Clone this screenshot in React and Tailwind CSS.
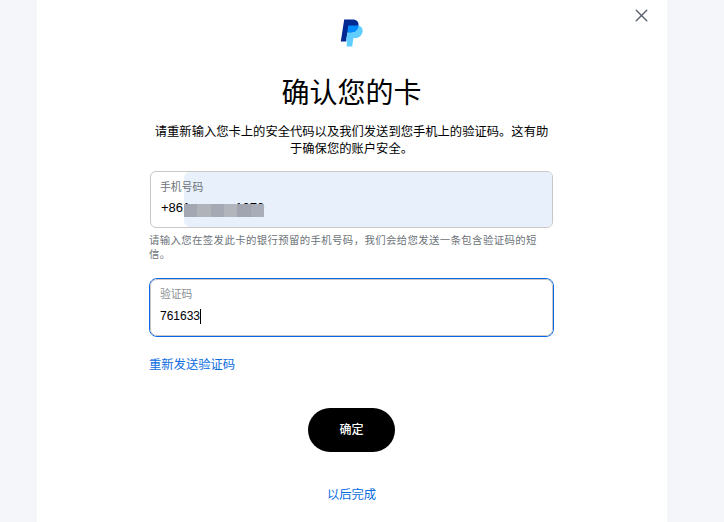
import React from 'react';
import { X } from 'lucide-react';

const font = { fontFamily: '"Liberation Sans", "Noto Sans CJK SC", sans-serif' };

const PayPalLogo = () => (
    <svg width="24" height="28" viewBox="0 0 24 28" className="block">
        <path d="M4.2 0.5H12.5C16.8 0.5 19 3 18.5 6.6C18 11 15 13.6 10.6 13.6H7.4L6.2 22.6H0.8Z" fill="#002991" />
        <path d="M6 21.5L7.4 13.6H11C15.5 13.6 18 10.8 18.6 6.5C21.5 7.5 23 9.5 22.6 12.5C22 16.6 19.2 19 15.2 19H13.4L12.2 27.5H6.6L7 22.5Z" fill="#60cdff" />
        <path d="M7.4 13.6L8.3 6.6H18.6C18.4 10.8 15.5 13.6 11 13.6Z" fill="#008cff" />
    </svg>
);

export default function App() {
    return (
        <div style={font} className="w-[724px] h-[522px] overflow-hidden bg-[#f5f6fa] pl-[37px]">
            <div className="relative w-[630px] h-[522px] bg-white flex flex-col items-center pr-[1px]">
                <button className="absolute top-[5px] right-[15px] text-[#545d68]">
                    <X size={21} strokeWidth={1.6} />
                </button>

                <div className="mt-[19px]">
                    <PayPalLogo />
                </div>

                <h1 className="mt-[27px] text-[28px] leading-[40px] font-normal text-black">确认您的卡</h1>

                <p className="mt-[10px] w-[404px] text-center text-[12.3px] leading-[17px] text-black">
                    请重新输入您卡上的安全代码以及我们发送到您手机上的验证码。这有助于确保您的账户安全。
                </p>

                {/* Phone field */}
                <div className="mt-[13px] w-[403px] self-start ml-[113px]">
                    <div className="relative h-[57px] rounded-[6px] border border-[#c9c6c3] bg-white overflow-hidden">
                        <div className="absolute left-[33px] right-0 top-0 bottom-0 bg-[#e8f0fc] rounded-l-[6px]" />
                        <div className="relative pl-[10px] pt-[7px]">
                            <div className="-ml-px text-[10.8px] leading-[16px] text-[#6c7378]">手机号码</div>
                            <div className="mt-[4px] text-[13px] leading-[18px] text-black">
                                +861<span className="ml-[45px]">1070</span>
                            </div>
                        </div>
                        <div className="absolute left-[33px] top-[32px] w-[80px] h-[13px] flex">
                            <div className="flex-1 bg-[#a3a7b1]" />
                            <div className="flex-1 bg-[#b0b3ba]" />
                            <div className="flex-1 bg-[#a5a9b3]" />
                            <div className="flex-1 bg-[#b2b5bc]" />
                            <div className="flex-1 bg-[#a1a5b0]" />
                            <div className="flex-1 bg-[#a9adb7]" />
                        </div>
                    </div>
                    <p className="mt-[6px] -ml-px w-[390px] text-[10.4px] tracking-[0.38px] leading-[14px] text-[#6c7378]">
                        请输入您在签发此卡的银行预留的手机号码，我们会给您发送一条包含验证码的短信。
                    </p>
                </div>

                {/* Code field */}
                <div className="mt-[16px] w-[405px] self-start ml-[112px] rounded-[8px] border border-[#0a68e8]">
                    <div className="h-[57px] rounded-[7px] border border-[#c9c6c3] bg-white pl-[9px] pt-[6px]">
                        <div className="text-[10.8px] leading-[16px] text-[#8a8f94]">验证码</div>
                        <div className="mt-[5px] flex items-center text-[12px] leading-[18px] text-black">
                            761633
                            <span className="w-px h-[15px] bg-black" />
                        </div>
                    </div>
                </div>

                <a className="mt-[19px] self-start ml-[112px] text-[12.3px] leading-[18px] text-[#0a6cdf]">重新发送验证码</a>

                <button className="mt-[34px] w-[87px] h-[44px] rounded-full bg-black text-white text-[12px] font-medium">确定</button>

                <a className="mt-[34px] text-[12.3px] leading-[18px] text-[#0a6cdf]">以后完成</a>
            </div>
        </div>
    );
}
